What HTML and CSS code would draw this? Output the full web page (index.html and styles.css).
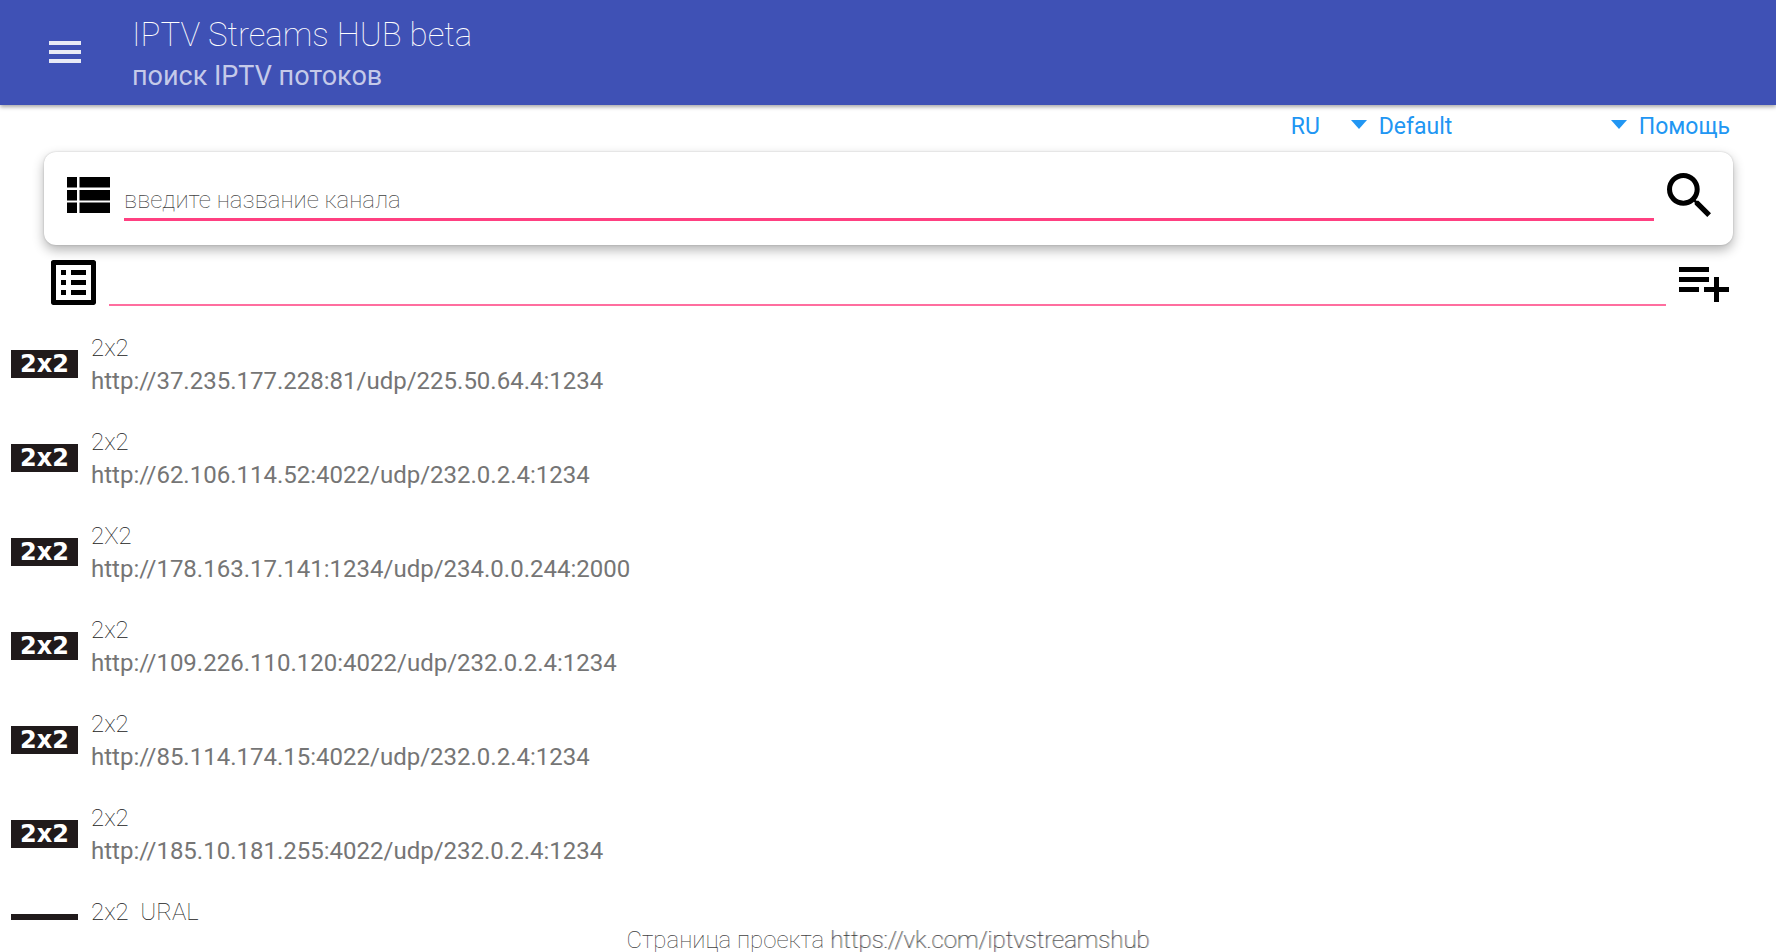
FILE: index.html
```html
<!DOCTYPE html>
<html lang="ru">
<head>
<meta charset="utf-8">
<title>IPTV Streams HUB</title>
<link rel="stylesheet" href="styles.css">
</head>
<body>
<header class="app-bar">
  <button class="icon-button menu" type="button" aria-label="Меню">
    <svg viewBox="0 0 32 24" width="32" height="24"><path d="M0 0h32v4H0zM0 9h32v4H0zM0 18h32v4H0z"/></svg>
  </button>
  <div class="titles">
    <h1 class="title">IPTV Streams HUB beta</h1>
    <p class="subtitle">поиск IPTV потоков</p>
  </div>
</header>
<main class="content">
  <nav class="options">
    <div class="picker picker-language">
      <select aria-label="Язык"><option>RU</option></select>
      <svg class="caret" viewBox="0 0 16 9" width="16" height="9"><path d="M0 0h16L8 9z"/></svg>
    </div>
    <div class="picker picker-theme">
      <select aria-label="Тема"><option>Default</option></select>
      <svg class="caret" viewBox="0 0 16 9" width="16" height="9"><path d="M0 0h16L8 9z"/></svg>
    </div>
    <a class="help" href="#help">Помощь</a>
  </nav>
  <form class="search-card">
    <button class="icon-button" type="button" aria-label="Список каналов">
      <svg viewBox="0 0 44 36" width="44" height="36"><path d="M0 0h10v10.500H0zM12.500 0H43v10.500H12.500zM0 13h10v10.500H0zM12.500 13H43v10.500H12.500zM0 25.500h10V36H0zM12.500 25.500H43V36H12.500z"/></svg>
    </button>
    <input class="search-input" type="text" aria-label="Название канала" placeholder="введите название канала">
    <button class="icon-button" type="submit" aria-label="Найти">
      <svg viewBox="3 3 17.490 17.490" width="44" height="44"><path d="M15.500 14h-.79l-.28-.27A6.471 6.471 0 0 0 16 9.500 6.500 6.500 0 1 0 9.500 16c1.610 0 3.090-.59 4.230-1.570l.27.28v.79l5 4.990L20.490 19l-4.990-5zm-6 0C7.010 14 5 11.990 5 9.500S7.010 5 9.500 5 14 7.010 14 9.500 11.990 14 9.500 14z"/></svg>
    </button>
  </form>
  <form class="playlist-row">
    <button class="icon-button" type="button" aria-label="Плейлисты">
      <svg viewBox="3 3 18 18" width="45" height="45"><path d="M19 5v14H5V5h14m1.100-2H3.900c-.5 0-.9.4-.9.9v16.200c0 .4.4.9.9.9h16.200c.4 0 .9-.5.9-.9V3.900c0-.5-.5-.9-.9-.9zM11 7h6v2h-6V7zm0 4h6v2h-6v-2zm0 4h6v2h-6zM7 7h2v2H7zm0 4h2v2H7zm0 4h2v2H7z"/></svg>
    </button>
    <input class="playlist-input" type="text" aria-label="Адрес плейлиста">
    <button class="icon-button" type="submit" aria-label="Добавить плейлист">
      <svg viewBox="2 4 20 16" width="50" height="40"><path d="M14 10H2v2h12v-2zm0-4H2v2h12V6zm4 8v-4h-2v4h-4v2h4v4h2v-4h4v-2h-4zM2 16h8v-2H2v2z"/></svg>
    </button>
  </form>
  <ul class="channels">
    <li class="channel"><span class="logo">2x2</span><div><h2 class="name">2x2</h2><p class="url">http://37.235.177.228:81/udp/225.50.64.4:1234</p></div></li>
    <li class="channel"><span class="logo">2x2</span><div><h2 class="name">2x2</h2><p class="url">http://62.106.114.52:4022/udp/232.0.2.4:1234</p></div></li>
    <li class="channel"><span class="logo">2x2</span><div><h2 class="name">2X2</h2><p class="url">http://178.163.17.141:1234/udp/234.0.0.244:2000</p></div></li>
    <li class="channel"><span class="logo">2x2</span><div><h2 class="name">2x2</h2><p class="url">http://109.226.110.120:4022/udp/232.0.2.4:1234</p></div></li>
    <li class="channel"><span class="logo">2x2</span><div><h2 class="name">2x2</h2><p class="url">http://85.114.174.15:4022/udp/232.0.2.4:1234</p></div></li>
    <li class="channel"><span class="logo">2x2</span><div><h2 class="name">2x2</h2><p class="url">http://185.10.181.255:4022/udp/232.0.2.4:1234</p></div></li>
    <li class="channel"><span class="logo"></span><div><h2 class="name">2x2&nbsp; URAL</h2></div></li>
  </ul>
</main>
<footer class="footer">Страница проекта <a href="https://vk.com/iptvstreamshub">https://vk.com/iptvstreamshub</a></footer>
</body>
</html>
```
FILE: styles.css
```css
* { box-sizing: border-box; }

body {
  display: flex;
  flex-direction: column;
  height: 100vh;
  margin: 0;
  overflow: hidden;
  background: #fff;
  color: #757575;
  font-family: Roboto, "Noto Sans", sans-serif;
  font-size: 24px;
}

h1, h2, p, ul { margin: 0; padding: 0; }

.icon-button {
  display: flex;
  flex: none;
  padding: 0;
  border: 0;
  background: none;
  fill: #000;
}

.app-bar {
  display: flex;
  flex: none;
  align-items: center;
  gap: 51px;
  padding: 12px 49px 11px;
  background: #3f51b5;
  box-shadow: 0 2px 4px rgba(0, 0, 0, .35);
}

.menu { fill: #e8eaf6; }

.title {
  color: #fff;
  font-size: 33px;
  font-weight: 100;
  line-height: 46px;
}

.subtitle {
  color: #c5cae9;
  font-size: 27px;
  line-height: 36px;
}

.content {
  display: flex;
  flex: 1;
  flex-direction: column;
  min-height: 0;
}

.options {
  display: flex;
  flex: none;
  justify-content: flex-end;
  align-items: center;
  gap: 12px;
  height: 42px;
  padding: 0 46px;
  color: #2196f3;
}

.picker { position: relative; }
.picker-language { width: 76px; }
.picker-theme { width: 248px; }

.picker select {
  width: 100%;
  padding: 0;
  border: 0;
  appearance: none;
  background: none;
  color: inherit;
  font: inherit;
  font-size: 23px;
}

.caret {
  position: absolute;
  top: 8px;
  right: 0;
  fill: currentColor;
  pointer-events: none;
}

.help {
  color: inherit;
  font-size: 23px;
  text-decoration: none;
}

.search-card {
  display: flex;
  flex: none;
  align-items: center;
  gap: 13px;
  margin: 5px 43px 0 44px;
  padding: 16px 22px 24px 23px;
  border-radius: 12px;
  background: #fff;
  box-shadow: 0 0 2px rgba(0, 0, 0, .2), 0 5px 12px rgba(0, 0, 0, .3);
}

.search-input,
.playlist-input {
  flex: 1;
  min-width: 0;
  padding: 0;
  border: 0;
  outline: 0;
  background: none;
  color: #424242;
  font: inherit;
}

.search-input {
  height: 53px;
  padding-top: 14px;
  border-bottom: 3px solid #ff4081;
  font-weight: 100;
}

.search-input::placeholder { color: #424242; }

.playlist-row {
  display: flex;
  flex: none;
  align-items: center;
  gap: 13px;
  margin-top: 13px;
  padding: 0 47px 0 51px;
}

.playlist-input {
  height: 48px;
  border-bottom: 2px solid #ff6e9f;
}

.channels {
  flex: 1;
  min-height: 0;
  margin-top: 12px;
  overflow: hidden;
  list-style: none;
}

.channel {
  display: flex;
  gap: 13px;
  height: 94px;
  padding: 14px 11px 0;
}

.logo {
  display: flex;
  flex: none;
  align-items: center;
  justify-content: center;
  width: 67px;
  height: 28px;
  margin-top: 18px;
  background: #201a1b;
  color: #fff;
  font: bold 24px/28px "DejaVu Sans", sans-serif;
}

.name {
  font-size: 24px;
  font-weight: 100;
  line-height: 32px;
  color: #212121;
}

.url {
  font-size: 24px;
  font-weight: 400;
  line-height: 34px;
}

.footer {
  flex: none;
  height: 32px;
  overflow: hidden;
  color: #424242;
  font-weight: 100;
  line-height: 41px;
  text-align: center;
}

.footer a {
  color: #424242;
  text-decoration: none;
  text-shadow: 1px 0 #9e9e9e;
}
```
